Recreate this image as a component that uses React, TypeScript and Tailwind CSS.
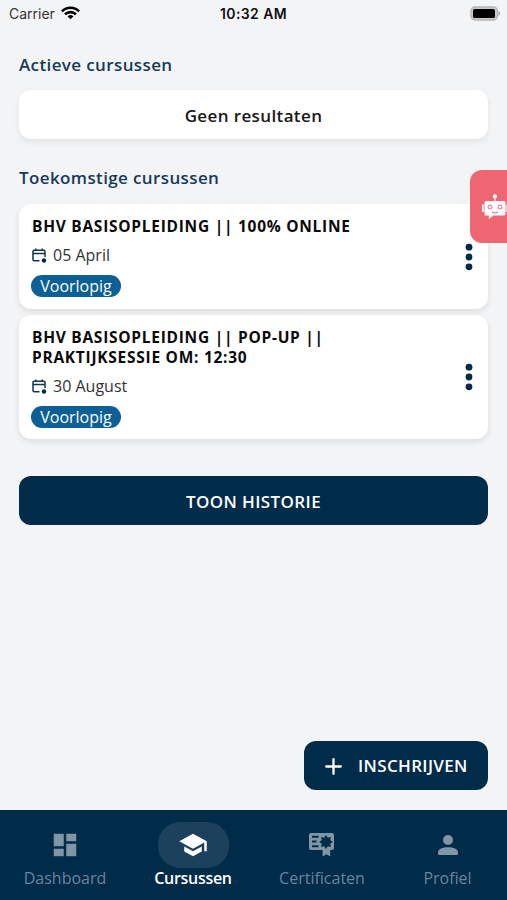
import { Plus } from 'lucide-react';
import { MdDashboard, MdSchool } from 'react-icons/md';

const courses = [
  { title: ['BHV BASISOPLEIDING || 100% ONLINE'], date: '05 April', status: 'Voorlopig', height: 'h-[105px]' },
  { title: ['BHV BASISOPLEIDING || POP-UP ||', 'PRAKTIJKSESSIE OM: 12:30'], date: '30 August', status: 'Voorlopig', height: 'h-[124px]' },
];

function CertificateIcon() {
  return (
    <svg viewBox="0 0 26 24" className="h-6 w-[26px]" fill="currentColor">
      <path
        fillRule="evenodd"
        d="M2 0h21a2 2 0 0 1 2 2v13a2 2 0 0 1-2 2h-1.800v6.500l-3.700-2.200-3.900 2.200V17H2a2 2 0 0 1-2-2V2a2 2 0 0 1 2-2ZM3 2.800v2h6.500v-2ZM3 7.500v2h4.500v-2ZM3 12.200v2h6.500v-2ZM17 2l-1.800 2.700-3.100-.7.700 3.100L10.200 9l2.600 1.800-.7 3.200 3.100-.7L17 16l1.800-2.700 3.100.7-.7-3.200L23.800 9l-2.600-1.900.7-3.100-3.100.7Z"
      />
    </svg>
  );
}

function PersonIcon() {
  return (
    <svg viewBox="0 0 20 20" className="h-5 w-5" fill="currentColor">
      <circle cx="10" cy="5" r="5" />
      <path d="M0 17.500C0 13.900 5 12.300 10 12.300s10 1.600 10 5.200v1a1.500 1.500 0 0 1-1.500 1.500h-17A1.500 1.500 0 0 1 0 18.500Z" />
    </svg>
  );
}

const tabs = [
  { label: 'Dashboard', icon: <MdDashboard size={30} />, width: 'w-[130px]' },
  { label: 'Cursussen', icon: <MdSchool size={30} />, width: 'w-[126px]', active: true },
  { label: 'Certificaten', icon: <CertificateIcon />, width: 'w-[132px]' },
  { label: 'Profiel', icon: <PersonIcon />, width: 'w-[119px]' },
];

function StatusBar() {
  return (
    <header className="grid h-7 grid-cols-3 items-center pr-[6px] pl-[9px] font-['Inter',sans-serif] text-sm text-[#333]">
      <div className="flex items-center gap-[6px]">
        <span>Carrier</span>
        <svg viewBox="0 0 20 14" className="mb-[2px] h-[14px] w-[19px]" fill="none" stroke="#050505" strokeWidth="2.700">
          <path d="M1 5.200a12.700 12.700 0 0 1 18 0" />
          <path d="M4.200 8.500a8.200 8.200 0 0 1 11.600 0" />
          <path d="M10 13.700 6.900 10.600a4.400 4.400 0 0 1 6.200 0Z" fill="#050505" stroke="none" />
        </svg>
      </div>
      <span className="-mr-1 -ml-4 pl-[9px] text-center font-semibold tracking-[0.4px] whitespace-nowrap text-[#111]">10:32 AM</span>
      <svg viewBox="0 0 31 15" className="mb-[2px] h-[15px] w-[31px] justify-self-end">
        <rect x="1" y="1" width="26.500" height="13" rx="4" fill="#ccc" stroke="#b5b5b5" strokeWidth="1.300" />
        <rect x="3" y="3" width="22" height="9" rx="1.500" fill="#000" />
        <path d="M28.500 5v5c2-.8 2-4.200 0-5Z" fill="#aaa" />
      </svg>
    </header>
  );
}

function CalendarIcon() {
  return (
    <svg viewBox="0 0 15 15" className="h-[15px] w-[15px]" fill="none" stroke="#12334f" strokeWidth="1.500">
      <path d="M7.500 12.700H2.200c-.8 0-1.200-.4-1.200-1.200v-8c0-.8.4-1.200 1.200-1.200h9.600c.8 0 1.200.4 1.200 1.200V9M1 5.500h12M3.800.5v2M10.200.5v2" />
      <circle cx="12" cy="12.500" r="2.200" fill="#002b49" stroke="none" />
    </svg>
  );
}

function Dots() {
  return (
    <svg viewBox="0 0 8 28" className="h-7 w-2" fill="#002b49">
      <circle cx="4" cy="4.200" r="3.400" />
      <circle cx="4" cy="14" r="3.400" />
      <circle cx="4" cy="23.800" r="3.400" />
    </svg>
  );
}

function Robot() {
  return (
    <svg viewBox="0 0 26 26" className="h-[26px] w-[26px] shrink-0" fill="#fff">
      <circle cx="13" cy="2.400" r="2.100" />
      <path d="M12.500 3h1v5h-1ZM0 10.500h1.700v7.500H.8a.8.8 0 0 1-.8-.8ZM24.300 10.500H26v7.500h-1.700Z" />
      <path d="M4 7h18a1.500 1.500 0 0 1 1.500 1.500V20a1.500 1.500 0 0 1-1.500 1.500H11.500L6.800 25v-3.500H4A1.500 1.500 0 0 1 2.500 20V8.500A1.500 1.500 0 0 1 4 7Z" />
      <g fill="none" stroke="#ef6673" strokeWidth="1">
        <circle cx="8" cy="13" r="2" />
        <circle cx="18" cy="13" r="2" />
        <path d="M10 18.200q3 1.600 6 0" />
      </g>
    </svg>
  );
}

export default function App() {
  return (
    <div className="relative flex h-[900px] w-[507px] flex-col overflow-hidden bg-[#f3f4f6] font-['Open_Sans',sans-serif]">
      <StatusBar />

      <main className="flex grow flex-col px-[19px] pt-[24px]">
        <h2 className="h-[38px] pt-px text-[17px] leading-6 font-semibold tracking-[0.38px] text-[#173a59]">Actieve cursussen</h2>
        <div className="flex h-[49px] items-center justify-center rounded-xl bg-white pt-[2px] text-[17px] font-semibold tracking-[0.38px] text-[#181818] shadow-[0_3px_6px_rgba(0,0,0,0.07)]">
          Geen resultaten
        </div>

        <h2 className="mt-[27px] h-[38px] text-[17px] leading-6 font-semibold tracking-[0.38px] text-[#173a59]">Toekomstige cursussen</h2>
        <div className="flex flex-col gap-[6px]">
          {courses.map((course) => (
            <article
              key={course.date}
              className={`flex items-center justify-between rounded-xl bg-white pr-[15px] pl-[13px] shadow-[0_3px_6px_rgba(0,0,0,0.09)] ${course.height}`}
            >
              <div className="flex h-full flex-col items-start pt-[12px]">
                <h3 className="text-[15.5px] leading-5 font-bold tracking-[0.73px] text-[#0a0a0a]">
                  {course.title.map((line) => (
                    <span key={line} className="block whitespace-nowrap">{line}</span>
                  ))}
                </h3>
                <div className="mt-[7px] flex h-6 items-center gap-[6px] text-base text-[#333]">
                  <CalendarIcon />
                  <span>{course.date}</span>
                </div>
                <span className="mt-2 -ml-px flex h-[22px] w-[90px] items-center justify-center rounded-full bg-[#0c6095] pb-px text-base text-white">
                  {course.status}
                </span>
              </div>
              <Dots />
            </article>
          ))}
        </div>

        <button className="mt-[37px] h-[49px] rounded-xl bg-[#002b49] pt-[2px] text-[17px] font-semibold tracking-[0.4px] text-white">TOON HISTORIE</button>

        <button className="mt-auto mb-5 flex h-[49px] w-[184px] items-center gap-[12px] self-end rounded-xl bg-[#002b49] pt-px pl-[17px] text-[17px] font-semibold tracking-[0.35px] text-white">
          <Plus size={25} strokeWidth={2.200} />
          INSCHRIJVEN
        </button>
      </main>

      <nav className="flex h-[90px] shrink-0 bg-[#002b49] pt-3">
        {tabs.map((tab) => (
          <div key={tab.label} className={`flex flex-col items-center ${tab.width} ${tab.active ? 'text-white' : 'text-[#8095a5]'}`}>
            <div className={`flex h-[46px] w-[71px] items-center justify-center rounded-[22px] ${tab.active ? 'bg-[#1b415c]' : ''}`}>
              {tab.icon}
            </div>
            <span className={`text-base leading-5 ${tab.active ? 'font-semibold tracking-[-0.3px]' : 'text-[#6885a0]'}`}>{tab.label}</span>
          </div>
        ))}
      </nav>

      {/* chat button, sticks out from the right edge */}
      <button className="absolute top-[170px] left-[470px] flex h-[73px] w-[50px] items-center rounded-xl bg-[#ef6673] pl-3">
        <Robot />
      </button>
    </div>
  );
}
